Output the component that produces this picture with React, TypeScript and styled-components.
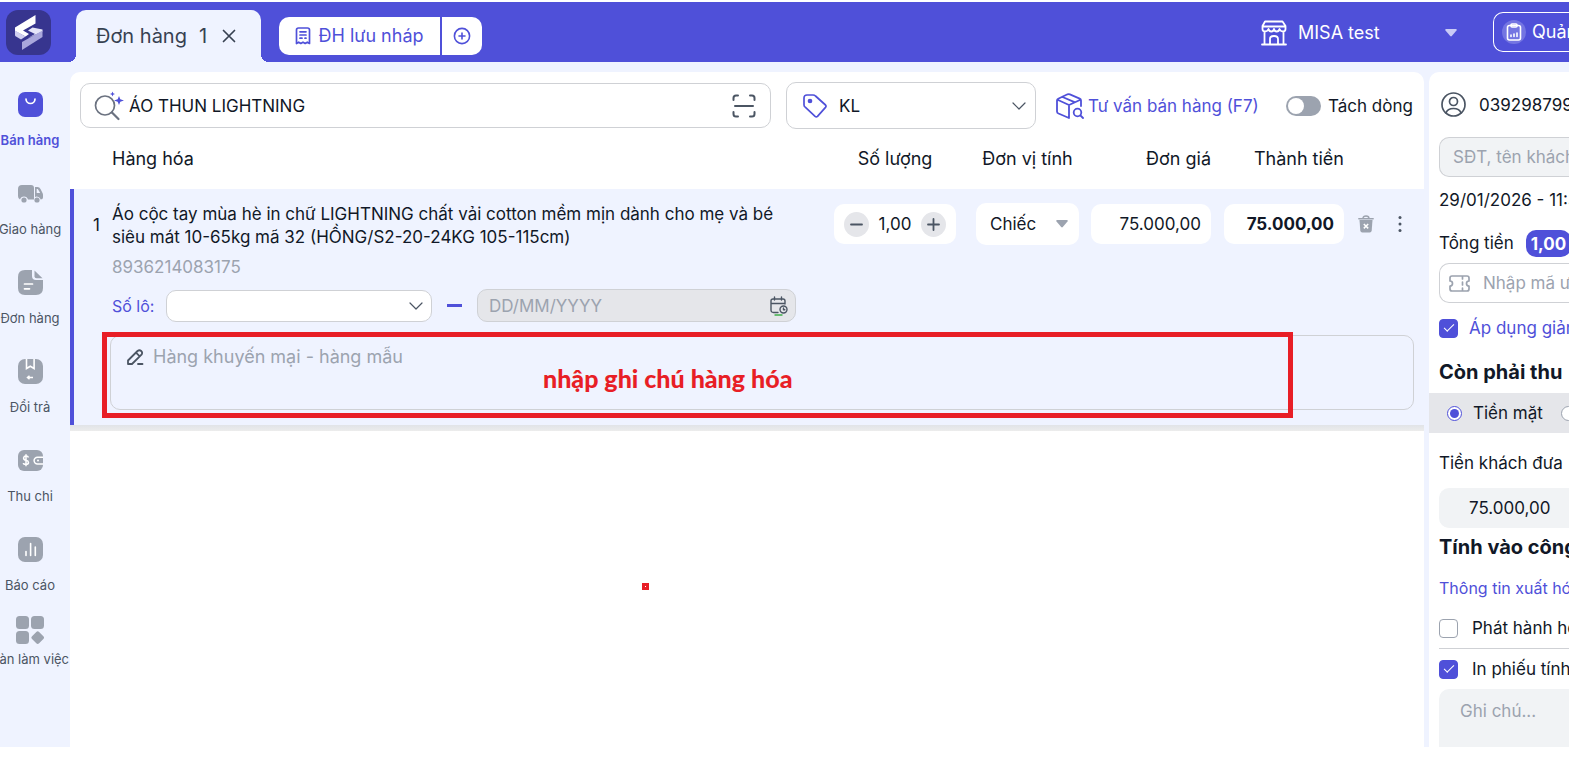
import React from 'react';
import styled, { createGlobalStyle, css } from 'styled-components';

const c = {
  brand: '#4f50d9',
  brandDark: '#37358f',
  tint: '#eff3ff',
  ink: '#111827',
  slate: '#4b5563',
  mute: '#9ca3af',
  line: '#cfd1d5',
  field: '#f1f3f5',
  bar: '#e5e6ea',
  red: '#e81e26',
};

const GlobalStyle = createGlobalStyle`
  *, *::before, *::after { box-sizing: border-box; }
  body { margin: 0; background: #fff; color: ${c.ink}; font: 17px/24px Inter, "Noto Sans", sans-serif; }
  button, input, select, textarea { font: inherit; color: inherit; margin: 0; }
  button { border: 0; background: none; padding: 0; cursor: pointer; }
  svg { display: block; flex: none; }
`;

const Page = styled.div`
  display: flex;
  flex-direction: column;
  min-height: 100vh;
  padding: 2px 10px 26px 0;
  overflow: hidden;
`;

/* Header */
const Header = styled.header`
  display: flex;
  align-items: center;
  height: 60px;
  background: ${c.brand};
  padding-left: 6px;
  overflow: hidden;
  color: #fff;
  font-size: 18px;
`;
const Logo = styled.div`
  flex: none;
  width: 45px;
  height: 45px;
  border-radius: 12px;
  background: ${c.brandDark};
  margin-right: 25px;
`;
const Tab = styled.div`
  position: relative;
  align-self: flex-end;
  display: flex;
  align-items: center;
  flex: none;
  gap: 12px;
  width: 185px;
  height: 52px;
  padding-left: 20px;
  border-radius: 10px 10px 0 0;
  background: ${c.tint};
  color: #374151;
  font-size: 20px;
  &::before, &::after {
    content: '';
    position: absolute;
    bottom: 0;
    width: 8px;
    height: 8px;
  }
  &::before { left: -8px; background: radial-gradient(circle at 0 0, transparent 8px, ${c.tint} 8px); }
  &::after { right: -8px; background: radial-gradient(circle at 100% 0, transparent 8px, ${c.tint} 8px); }
`;
const DraftGroup = styled.div`
  display: flex;
  flex: none;
  gap: 2px;
  height: 38px;
  margin: 8px 0 0 18px;
`;
const DraftButton = styled.button<{ $w: number; $end?: boolean }>`
  display: flex;
  align-items: center;
  justify-content: center;
  gap: 7px;
  width: ${p => p.$w}px;
  background: #fff;
  color: ${c.brand};
  border-radius: ${p => (p.$end ? '0 10px 10px 0' : '10px 0 0 10px')};
`;
const Branch = styled.button`
  display: flex;
  align-items: center;
  width: 196px;
  margin-left: auto;
  padding-top: 2px;
  flex: none;
  gap: 11px;
  & > :last-child { margin-left: auto; }
`;
const ManageButton = styled.button`
  display: flex;
  align-items: center;
  flex: none;
  gap: 6px;
  width: 76px;
  height: 40px;
  margin-left: 36px;
  padding-left: 8px;
  overflow: hidden;
  white-space: nowrap;
  border: 1px solid #fff;
  border-right: 0;
  border-radius: 10px 0 0 10px;
`;
const Disc = styled.span`
  display: grid;
  place-items: center;
  flex: none;
  width: 24px;
  height: 24px;
  border-radius: 50%;
  background: #7475e2;
`;

/* Body */
const Body = styled.div`
  display: flex;
  flex: 1;
  background: ${c.tint};
`;
const Sidebar = styled.nav`
  display: flex;
  flex-direction: column;
  flex: none;
  width: 70px;
  padding-top: 30px;
  overflow: hidden;
`;
const NavItem = styled.a<{ $active?: boolean; $short?: boolean }>`
  display: flex;
  flex-direction: column;
  align-items: center;
  justify-content: space-between;
  width: 60px;
  height: ${p => (p.$short ? 52 : 57)}px;
  margin-bottom: ${p => (p.$short ? 0 : 32)}px;
  font-size: 13px;
  line-height: 18px;
  white-space: nowrap;
  text-decoration: none;
  color: ${p => (p.$active ? c.brand : c.slate)};
  font-weight: ${p => (p.$active ? 600 : 400)};
  &:last-child { margin-top: -10px; }
  svg { color: ${p => (p.$active ? c.brand : c.mute)}; }
`;
const Main = styled.main`
  position: relative;
  flex: 1;
  min-width: 0;
  margin-top: 10px;
  border-radius: 10px 10px 0 0;
  background: #fff;
`;
const Toolbar = styled.div`
  display: flex;
  align-items: center;
  height: 67px;
  padding: 0 10px;
`;
const SearchBox = styled.label`
  display: flex;
  align-items: center;
  flex: 1;
  gap: 4px;
  height: 45px;
  padding: 0 14px 0 13px;
  border: 1px solid ${c.line};
  border-radius: 10px;
`;
const BareInput = styled.input`
  flex: 1;
  min-width: 0;
  border: 0;
  padding: 0;
  outline: 0;
  background: none;
  &::placeholder { color: ${c.mute}; opacity: 1; }
`;
const SelectWrap = styled.label<{ $w: number; $h: number; $line?: boolean; $r?: number }>`
  display: flex;
  align-items: center;
  flex: none;
  width: ${p => p.$w}px;
  height: ${p => p.$h}px;
  padding: 0 ${p => p.$r ?? 9}px 0 14px;
  background: #fff;
  border-radius: 10px;
  ${p => p.$line && css`border: 1px solid ${c.line};`}
`;
const BareSelect = styled.select`
  flex: 1;
  min-width: 0;
  appearance: none;
  border: 0;
  padding: 0;
  outline: 0;
  background: none;
`;
const PriceList = styled(SelectWrap)`
  margin-left: 15px;
  gap: 12px;
  padding-left: 16px;
`;
const Advice = styled.button`
  display: flex;
  align-items: center;
  flex: none;
  gap: 4px;
  width: 206px;
  margin-left: 20px;
  color: ${c.brand};
  white-space: nowrap;
`;
const SwitchLabel = styled.label`
  display: flex;
  align-items: center;
  flex: none;
  gap: 7px;
  width: 128px;
  margin-left: 24px;
  white-space: nowrap;
`;
const Switch = styled.input`
  appearance: none;
  display: flex;
  align-items: center;
  width: 35px;
  height: 20px;
  padding: 2px;
  border-radius: 10px;
  background: ${c.mute};
  &::before { content: ''; width: 16px; height: 16px; border-radius: 50%; background: #fff; }
  &:checked { background: ${c.brand}; justify-content: flex-end; }
`;

/* Order lines */
const Table = styled.table`
  width: 100%;
  table-layout: fixed;
  border-collapse: separate;
  border-spacing: 0;
  th { height: 50px; padding: 0 0 10px; font-size: 18px; font-weight: 400; text-align: left; }
  td { padding: 14px 0 0; vertical-align: top; background: ${c.tint}; }
  th:nth-child(3), td:nth-child(3) { padding-left: 10px; padding-right: 10px; text-align: center; }
  th:nth-child(4), td:nth-child(4) { padding-left: 10px; padding-right: 12px; text-align: center; }
  th:nth-child(5), td:nth-child(5) { padding-right: 13px; text-align: right; }
  th:nth-child(6), td:nth-child(6) { padding-right: 12px; text-align: right; }
  th:nth-child(2), td:nth-child(2) { padding-left: 2px; }
  td:first-child { border-left: 4px solid ${c.brand}; }
`;
const Col = styled.col<{ $w?: number }>`
  width: ${p => (p.$w ? `${p.$w}px` : 'auto')};
`;
const LineNo = styled.div`
  padding: 10px 0 0 19px;
`;
const ProductName = styled.div`
  width: 690px;
  max-width: 100%;
  line-height: 23px;
`;
const Barcode = styled.div`
  padding-top: 6px;
  color: ${c.mute};
`;
const Lot = styled.div`
  display: flex;
  align-items: center;
  padding-top: 10px;
  color: ${c.brand};
  & > label:first-child { width: 54px; font-size: 16px; }
`;
const Dash = styled.span`
  width: 15px;
  height: 3px;
  margin: 0 15px;
  background: ${c.brand};
`;
const DateBox = styled.label`
  display: flex;
  align-items: center;
  width: 319px;
  height: 33px;
  padding: 0 7px 0 11px;
  border: 1px solid ${c.line};
  border-radius: 10px;
  background: ${c.bar};
`;
const Cell = styled.div`
  display: flex;
  align-items: center;
  justify-content: space-between;
  height: 40px;
  margin-top: 1px;
  padding: 0 10px;
  border-radius: 10px;
  background: #fff;
`;
const NumberInput = styled.input<{ $bold?: boolean; $center?: boolean }>`
  width: 100%;
  min-width: 0;
  border: 0;
  padding: 0;
  background: none;
  text-align: ${p => (p.$center ? 'center' : 'right')};
  font-weight: ${p => (p.$bold ? 700 : 400)};
`;
const Round = styled.button`
  display: grid;
  place-items: center;
  flex: none;
  width: 25px;
  height: 25px;
  border-radius: 50%;
  background: ${c.bar};
  color: ${c.slate};
`;
const Actions = styled.div`
  display: flex;
  align-items: center;
  gap: 14px;
  height: 42px;
  padding-left: 2px;
`;
const NoteCell = styled.td`
  && { padding: 13px 10px 15px 36px; border-bottom: 0; }
`;
const NoteWrap = styled.div`
  position: relative;
`;
const NoteBox = styled.label`
  display: flex;
  gap: 9px;
  height: 75px;
  padding: 9px 16px;
  border: 1px solid ${c.line};
  border-radius: 10px;
`;
const NoteInput = styled.textarea`
  flex: 1;
  height: 56px;
  border: 0;
  padding: 0;
  outline: 0;
  resize: none;
  background: none;
  font-size: 18px;
  &::placeholder { color: ${c.mute}; opacity: 1; }
`;
const Callout = styled.div`
  position: absolute;
  inset: -3px 121px -8px -8px;
  display: flex;
  align-items: center;
  padding: 6px 0 0 436px;
  border: 5px solid ${c.red};
  color: ${c.red};
  font: 900 25px/30px Lato, "Open Sans", sans-serif;
  white-space: nowrap;
  pointer-events: none;
`;
const RowShadow = styled.div`
  height: 6px;
  background: linear-gradient(#e1e3e7, #ececec);
`;
const RedMark = styled.span`
  position: absolute;
  left: 572px;
  top: 511px;
  width: 7px;
  height: 7px;
  border: 3px solid ${c.red};
  background: #fff;
`;

/* Payment panel */
const Payment = styled.aside`
  display: flex;
  flex-direction: column;
  flex: none;
  width: 140px;
  margin: 10px 0 0 5px;
  padding-left: 10px;
  overflow: hidden;
  white-space: nowrap;
  border-radius: 10px 0 0 0;
  background: #fff;
`;
const Line = styled.div<{ $h?: number; $gap?: number; $pad?: number; $top?: number }>`
  display: flex;
  align-items: center;
  flex: none;
  gap: ${p => p.$gap ?? 0}px;
  height: ${p => p.$h ?? 40}px;
  padding: ${p => p.$top ?? 0}px 0 0 ${p => p.$pad ?? 0}px;
`;
const Field = styled.label<{ $fill?: boolean; $plain?: boolean; $pad: number }>`
  display: flex;
  align-items: center;
  flex: none;
  gap: 13px;
  height: 40px;
  padding-left: ${p => p.$pad}px;
  border: 1px solid ${p => (p.$plain ? c.field : c.line)};
  border-right: 0;
  border-radius: 10px 0 0 10px;
  background: ${p => (p.$fill ? c.field : '#fff')};
  color: ${p => (p.$plain ? c.ink : c.mute)};
`;
const Badge = styled.span`
  height: 27px;
  padding: 2px 5px 0;
  margin-left: 12px;
  border-radius: 10px;
  background: ${c.brand};
  color: #fff;
  font-weight: 700;
`;
const Heading = styled.h2`
  flex: none;
  margin: 0;
  font-size: 20px;
  line-height: 38px;
  height: 40px;
`;
const CheckLabel = styled.label<{ $tone?: boolean; $h?: number; $gap?: number }>`
  display: flex;
  align-items: center;
  flex: none;
  gap: ${p => p.$gap ?? 14}px;
  height: ${p => p.$h ?? 40}px;
  color: ${p => (p.$tone ? c.brand : c.ink)};
`;
const Check = styled.input`
  appearance: none;
  display: grid;
  place-items: center;
  flex: none;
  width: 19px;
  height: 19px;
  border: 1px solid ${c.mute};
  border-radius: 4px;
  &:checked { border-color: ${c.brand}; background: ${c.brand}; }
  &:checked::before {
    content: '';
    width: 10px;
    height: 5px;
    margin-bottom: 3px;
    border: solid #fff;
    border-width: 0 0 1px 1px;
    transform: rotate(-45deg);
  }
`;
const PayModes = styled.div`
  display: flex;
  align-items: center;
  flex: none;
  gap: 18px;
  height: 40px;
  margin-left: -10px;
  padding-left: 18px;
  background: ${c.bar};
  label { display: flex; align-items: center; gap: 11px; }
`;
const Radio = styled.input`
  appearance: none;
  display: grid;
  place-items: center;
  width: 15px;
  height: 15px;
  flex: none;
  border: 1px solid ${c.mute};
  border-radius: 50%;
  background: #fff;
  &:checked { border-color: ${c.brand}; }
  &:checked::before { content: ''; width: 9px; height: 9px; border-radius: 50%; background: ${c.brand}; }
`;
const TextLink = styled.a`
  color: ${c.brand};
  font-size: 16px;
  text-decoration: none;
`;
const Divider = styled.hr`
  flex: none;
  width: 100%;
  height: 1px;
  margin: 0;
  border: 0;
  background: ${c.line};
`;
const Memo = styled.textarea`
  flex: 1;
  width: 100%;
  min-height: 58px;
  border: 0;
  resize: none;
  padding: 10px 0 0 21px;
  border-radius: 10px 0 0 0;
  background: ${c.field};
  &::placeholder { color: ${c.mute}; opacity: 1; }
`;

const line = {
  fill: 'none',
  stroke: 'currentColor',
  strokeLinecap: 'round' as const,
  strokeLinejoin: 'round' as const,
};

const Chevron = () => (
  <svg width="14" height="10" viewBox="0 0 14 10" {...line} color={c.slate} strokeWidth="1.2"><path d="M1 2l6 6 6-6" /></svg>
);
const Caret = ({ color }: { color: string }) => (
  <svg width="12" height="8" viewBox="0 0 12 8"><path d="M1 0h10q1.2.4.5 1.4L6.8 7q-.8.8-1.6 0L.5 1.4Q-.2.4 1 0z" fill={color} /></svg>
);

const navItems = [
  {
    label: 'Bán hàng',
    icon: <><rect width="25" height="25" rx="7" fill="currentColor" /><path d="M8 7a4.5 4.5 0 0 0 9 0" fill="none" stroke="#fff" strokeWidth="1.7" strokeLinecap="round" /></>,
  },
  {
    label: 'Giao hàng',
    icon: <g fill="currentColor"><path d="M4 4h9q3 0 3 3v11.500H10a4.200 4.200 0 0 0-8 0Q0 18 0 15V8q0-4 4-4z" /><path d="M17 6h2.500q2 0 3 2l2 4q.5 1 .5 2v2.500q0 2-2.300 2a4.200 4.200 0 0 0-5.700-2.500z" /><path d="M18.700 8h1.100l2.400 4h-3.500z" fill={c.tint} /><circle cx="6" cy="19" r="2.600" /><circle cx="19" cy="19" r="2.600" /></g>,
  },
  {
    label: 'Đơn hàng',
    icon: <><path d="M7 0h7v6q0 4 4 4h7v8q0 7-7 7H7q-7 0-7-7V7q0-7 7-7z" fill="currentColor" /><path d="M16.500.5 24.500 8.300h-6q-2 0-2-2z" fill="currentColor" /><path d="M6.500 14h8M6.500 18.800h5" stroke="#fff" strokeWidth="1.700" strokeLinecap="round" /></>,
  },
  {
    label: 'Đổi trả',
    icon: <><rect width="25" height="25" rx="7" fill="currentColor" /><path d="M8.500 0v9.500l3.800-2.300 3.800 2.300V0" fill="none" stroke="#fff" strokeWidth="1.600" /><path d="M15 18.500H9.500m2-1.700-2 1.700 2 1.700" fill="none" stroke="#fff" strokeWidth="1.500" /></>,
  },
  {
    label: 'Thu chi',
    icon: <><rect y="2" width="25" height="21" rx="6" fill="currentColor" /><path d="M10.500 9.500Q10 8 8 8T5.600 9.900Q5.600 11.800 8 12.300T10.500 14.600Q10.500 16.500 8 16.500T5.400 15M8 6.300v12" fill="none" stroke="#fff" strokeWidth="1.500" /><path d="M25 9.200h-5.500a3.400 3.400 0 0 0 0 6.800H25" fill="none" stroke="#fff" strokeWidth="1.500" /><circle cx="20" cy="12.600" r="1" fill="#fff" /></>,
  },
  {
    label: 'Báo cáo',
    icon: <><rect width="25" height="25" rx="7" fill="currentColor" /><path d="M8 14.500v4M12.600 6.500v12M17.300 10v8.500" stroke="#fff" strokeWidth="1.600" strokeLinecap="round" /></>,
  },
];

export default function App() {
  return (
    <>
      <GlobalStyle />
      <Page>
        <Header>
          <Logo>
            <svg width="45" height="45" viewBox="0 0 45 45">
              <path d="M29.500 5 9 17.500v3.500l10.500 5.500 3.500-2.500-6-3.500 12.500-7z" fill="#fff" />
              <path d="M9 20.500v4.500q0 1 1 1.500l5 3 4.500-3z" fill="#cfcef0" />
              <path d="m26.500 17.500-4.500 3 7 3.500-7 4 14.500-6.500v-2z" fill="#e4e4f8" />
              <path d="M36.500 20.500V27L16 40v-8z" fill="#a9a7dc" />
            </svg>
          </Logo>
          <Tab>
            <span>Đơn hàng</span>
            <span>1</span>
            <button aria-label="Đóng đơn hàng">
              <svg width="20" height="20" viewBox="0 0 20 20" {...line} strokeWidth="1.700"><path d="m4.500 4.500 11 11M15.500 4.500l-11 11" /></svg>
            </button>
          </Tab>
          <DraftGroup>
            <DraftButton $w={161}>
              <svg width="16" height="18" viewBox="0 0 16 18" {...line} strokeWidth="1.700">
                <path d="M1.500 16.500V3q0-2 2-2h9q2 0 2 2v13.500l-2.200-1.300-2.100 1.300L8 15.200l-2.200 1.300-2.100-1.300zM5 4.800h6M5 8h6M5 11.200h2M10 11.200h1" />
              </svg>
              ĐH lưu nháp
            </DraftButton>
            <DraftButton $w={40} $end aria-label="Thêm đơn hàng">
              <svg width="18" height="18" viewBox="0 0 18 18" {...line} strokeWidth="1.600"><circle cx="9" cy="9" r="7.600" /><path d="M9 6v6M6 9h6" /></svg>
            </DraftButton>
          </DraftGroup>
          <Branch>
            <svg width="26" height="26" viewBox="0 0 26 26" {...line} strokeWidth="1.800">
              <path d="M4 1.500h17.500L24.500 6v3q0 2.500-2.500 2.500t-3.500-2.500q-.5 2.500-2.800 2.500T13 9q-.5 2.500-2.700 2.500T7.500 9Q6.500 11.500 4 11.500T1.500 9V6zM1.500 6.500h23M3.500 12v12.500M22.500 12v12.500M1 24.500h24M9 24v-5q0-3 4-3t4 3v5" />
            </svg>
            <span>MISA test</span>
            <Caret color="#c9cbf6" />
          </Branch>
          <ManageButton>
            <Disc>
              <svg width="16" height="18" viewBox="0 0 16 18" {...line} strokeWidth="1.600">
                <rect x="1.500" y="2.500" width="13" height="14.500" rx="2" /><rect x="5" y="1" width="6" height="3" rx="1" /><path d="M5 12v1.500M8 11v2.500M11 10v3.500" />
              </svg>
            </Disc>
            Quản lý
          </ManageButton>
        </Header>

        <Body>
          <Sidebar>
            {navItems.map((item, i) => (
              <NavItem key={item.label} href="#" $active={i === 0}>
                <svg width="25" height="25" viewBox="0 0 25 25">{item.icon}</svg>
                {item.label}
              </NavItem>
            ))}
            <NavItem href="#" $short>
              <svg width="28" height="28" viewBox="0 0 28 28" fill="currentColor">
                <rect width="13" height="13" rx="3.500" /><rect x="15" width="13" height="13" rx="3.500" /><rect y="15" width="13" height="13" rx="3.500" />
                <rect x="16.700" y="16.600" width="10" height="10" rx="2" transform="rotate(45 21.700 21.600)" />
              </svg>
              Bàn làm việc
            </NavItem>
          </Sidebar>

          <Main>
            <Toolbar>
              <SearchBox>
                <svg width="31" height="30" viewBox="0 0 31 30" {...line} color="#6b7280">
                  <circle cx="11" cy="14.500" r="9.500" strokeWidth="1.700" /><path d="m18 21.500 6.500 6.500" strokeWidth="2.200" />
                  <path d="m25 5 1.300 3.200 3.700 1.300-3.700 1.300L25 14l-1.300-3.200L20 9.500l3.700-1.300zM18.500.5l.7 1.800 1.800.7-1.800.7-.7 1.800-.7-1.800L16 3l1.800-.7z" fill={c.brand} stroke="none" />
                </svg>
                <BareInput aria-label="Tìm hàng hóa" defaultValue="ÁO THUN LIGHTNING" />
                <svg width="24" height="24" viewBox="0 0 24 24" {...line} strokeWidth="2" color="#4b5563">
                  <path d="M1.500 6V4q0-2.500 2.500-2.500h2M18 1.500h2q2.500 0 2.500 2.500v2M22.500 18v2q0 2.500-2.500 2.500h-2M6 22.500H4q-2.500 0-2.500-2.500v-2M3 12h18" />
                </svg>
              </SearchBox>
              <PriceList $w={250} $h={47} $line>
                <svg width="24" height="24" viewBox="0 0 24 24" {...line} strokeWidth="1.700" color={c.brand}>
                  <path d="M1 4q0-3 3-3h6q1.500 0 2.500 1l10 9q1 1.200 0 2.400l-8 9q-1.200 1-2.400 0l-9.600-9Q1 12.400 1 11z" /><circle cx="7" cy="7" r="1.500" fill={c.brand} />
                </svg>
                <BareSelect aria-label="Bảng giá"><option>KL</option></BareSelect>
                <Chevron />
              </PriceList>
              <Advice>
                <svg width="28" height="26" viewBox="0 0 28 26" {...line} strokeWidth="1.800">
                  <path d="M13 25 2.500 20.500Q1 19.800 1 18.500V7.500Q1 6.300 2.200 5.700L11.500 1.300q1.200-.5 2.400 0l9.800 4.300q1.300.6 1.300 1.900V13M1.500 6.800 13 12l11.500-5.200M13 12v13M6.500 4l12 5.200" /><circle cx="21.500" cy="19.500" r="3.800" /><path d="m24.500 22.500 2.500 2.500" />
                </svg>
                Tư vấn bán hàng (F7)
              </Advice>
              <SwitchLabel><Switch type="checkbox" role="switch" />Tách dòng</SwitchLabel>
            </Toolbar>

            <Table>
              <colgroup><Col $w={40} /><Col /><Col $w={142} /><Col $w={125} /><Col $w={133} /><Col $w={132} /><Col $w={68} /></colgroup>
              <thead>
                <tr><th /><th>Hàng hóa</th><th>Số lượng</th><th>Đơn vị tính</th><th>Đơn giá</th><th>Thành tiền</th><th /></tr>
              </thead>
              <tbody>
                <tr>
                  <td><LineNo>1</LineNo></td>
                  <td>
                    <ProductName>Áo cộc tay mùa hè in chữ LIGHTNING chất vải cotton mềm mịn dành cho mẹ và bé siêu mát 10-65kg mã 32 (HỒNG/S2-20-24KG 105-115cm)</ProductName>
                    <Barcode>8936214083175</Barcode>
                    <Lot>
                      <label htmlFor="lot">Số lô:</label>
                      <SelectWrap as="div" $w={266} $h={32} $r={8} $line>
                        <BareSelect id="lot"><option value="" /></BareSelect>
                        <Chevron />
                      </SelectWrap>
                      <Dash />
                      <DateBox>
                        <BareInput aria-label="Hạn sử dụng" placeholder="DD/MM/YYYY" disabled />
                        <svg width="18" height="20" viewBox="0 0 18 20" {...line} strokeWidth="1.400" color="#4b5563">
                          <path d="M8 16.500H3.500Q1 16.500 1 14V5q0-2 2-2h10q2 0 2 2v3M1 7.500h14M4.500 1v3M11.500 1v3" /><circle cx="13.500" cy="13.500" r="3.500" /><path d="M13.500 12v1.700h1.300" /><path d="M5 19h7" stroke="#3fae49" />
                        </svg>
                      </DateBox>
                    </Lot>
                  </td>
                  <td>
                    <Cell>
                      <Round aria-label="Giảm"><svg width="13" height="13" viewBox="0 0 13 13" {...line} strokeWidth="1.800"><path d="M1 6.500h11" /></svg></Round>
                      <NumberInput aria-label="Số lượng" defaultValue="1,00" $center />
                      <Round aria-label="Tăng"><svg width="13" height="13" viewBox="0 0 13 13" {...line} strokeWidth="1.800"><path d="M1 6.500h11M6.500 1v11" /></svg></Round>
                    </Cell>
                  </td>
                  <td>
                    <SelectWrap $w={103} $h={42} $r={11}>
                      <BareSelect aria-label="Đơn vị tính"><option>Chiếc</option></BareSelect>
                      <Caret color={c.mute} />
                    </SelectWrap>
                  </td>
                  <td><Cell><NumberInput aria-label="Đơn giá" defaultValue="75.000,00" /></Cell></td>
                  <td><Cell><NumberInput aria-label="Thành tiền" defaultValue="75.000,00" $bold /></Cell></td>
                  <td>
                    <Actions>
                      <button aria-label="Xóa">
                        <svg width="16" height="18" viewBox="0 0 16 18" color={c.mute}>
                          <path d="M1.500 5h13l-.8 10.500q-.2 2-2 2H4.300q-1.800 0-2-2z" fill="currentColor" /><path d="M.8 3.700h14.400M5 3.500q0-2.500 3-2.500t3 2.500" {...line} strokeWidth="1.400" /><path d="m5.800 9 4.400 4.400m0-4.400-4.400 4.400" stroke="#fff" strokeWidth="1.500" />
                        </svg>
                      </button>
                      <button aria-label="Thêm thao tác">
                        <svg width="24" height="20" viewBox="0 0 24 20" fill={c.slate}><circle cx="12" cy="3.500" r="1.500" /><circle cx="12" cy="10" r="1.500" /><circle cx="12" cy="16.500" r="1.500" /></svg>
                      </button>
                    </Actions>
                  </td>
                </tr>
                <tr>
                  <NoteCell colSpan={7}>
                    <NoteWrap>
                      <NoteBox>
                        <svg width="17" height="24" viewBox="0 0 17 24" {...line} strokeWidth="1.800" color="#4b5563">
                          <path d="M1 19v-3.500L10.500 6q2-1.500 3.700 0t.3 3.700L5 19zM9 7.700l3.500 3.500M11 19h4.500" />
                        </svg>
                        <NoteInput aria-label="Ghi chú hàng hóa" placeholder="Hàng khuyến mại - hàng mẫu" />
                      </NoteBox>
                      <Callout>nhập ghi chú hàng hóa</Callout>
                    </NoteWrap>
                  </NoteCell>
                </tr>
              </tbody>
            </Table>
            <RowShadow />
            <RedMark />
          </Main>

          <Payment>
            <Line $h={65} $gap={13} $pad={2}>
              <svg width="25" height="25" viewBox="0 0 25 25" {...line} strokeWidth="1.700" color={c.slate}>
                <circle cx="12.500" cy="12.500" r="11.500" /><circle cx="12.500" cy="9.500" r="4" /><path d="M5 21q1.500-4.500 7.500-4.500T20 21" />
              </svg>
              039298799
            </Line>
            <Field $pad={13} $fill><BareInput aria-label="Khách hàng" placeholder="SĐT, tên khách hàng" /></Field>
            <Line $h={46}>29/01/2026 - 11:30</Line>
            <Line>Tổng tiền<Badge>1,00</Badge></Line>
            <Field $pad={9}>
              <svg width="21" height="17" viewBox="0 0 21 17" {...line} strokeWidth="1.700">
                <path d="M1 3q0-2 2-2h15q2 0 2 2v3q-2.500 0-2.500 2.500T20 11v3q0 2-2 2H3q-2 0-2-2v-3q2.500 0 2.500-2.500T1 6zM13.500 1v3M13.500 7v3M13.500 13v3" />
              </svg>
              <BareInput aria-label="Mã ưu đãi" placeholder="Nhập mã ưu đãi" />
            </Field>
            <CheckLabel $tone $h={50} $gap={11}><Check type="checkbox" defaultChecked />Áp dụng giảm giá</CheckLabel>
            <Heading>Còn phải thu</Heading>
            <PayModes>
              <label><Radio type="radio" name="pay" defaultChecked />Tiền mặt</label>
              <Radio type="radio" name="pay" aria-label="Chuyển khoản" />
            </PayModes>
            <Line $h={55} $top={4}>Tiền khách đưa</Line>
            <Field $pad={29} $fill $plain><BareInput aria-label="Tiền khách đưa" defaultValue="75.000,00" /></Field>
            <Heading>Tính vào công nợ</Heading>
            <Line><TextLink href="#">Thông tin xuất hóa đơn</TextLink></Line>
            <CheckLabel><Check type="checkbox" />Phát hành hóa đơn</CheckLabel>
            <Divider />
            <CheckLabel><Check type="checkbox" defaultChecked />In phiếu tính tiền</CheckLabel>
            <Memo aria-label="Ghi chú" placeholder="Ghi chú..." />
          </Payment>
        </Body>
      </Page>
    </>
  );
}
